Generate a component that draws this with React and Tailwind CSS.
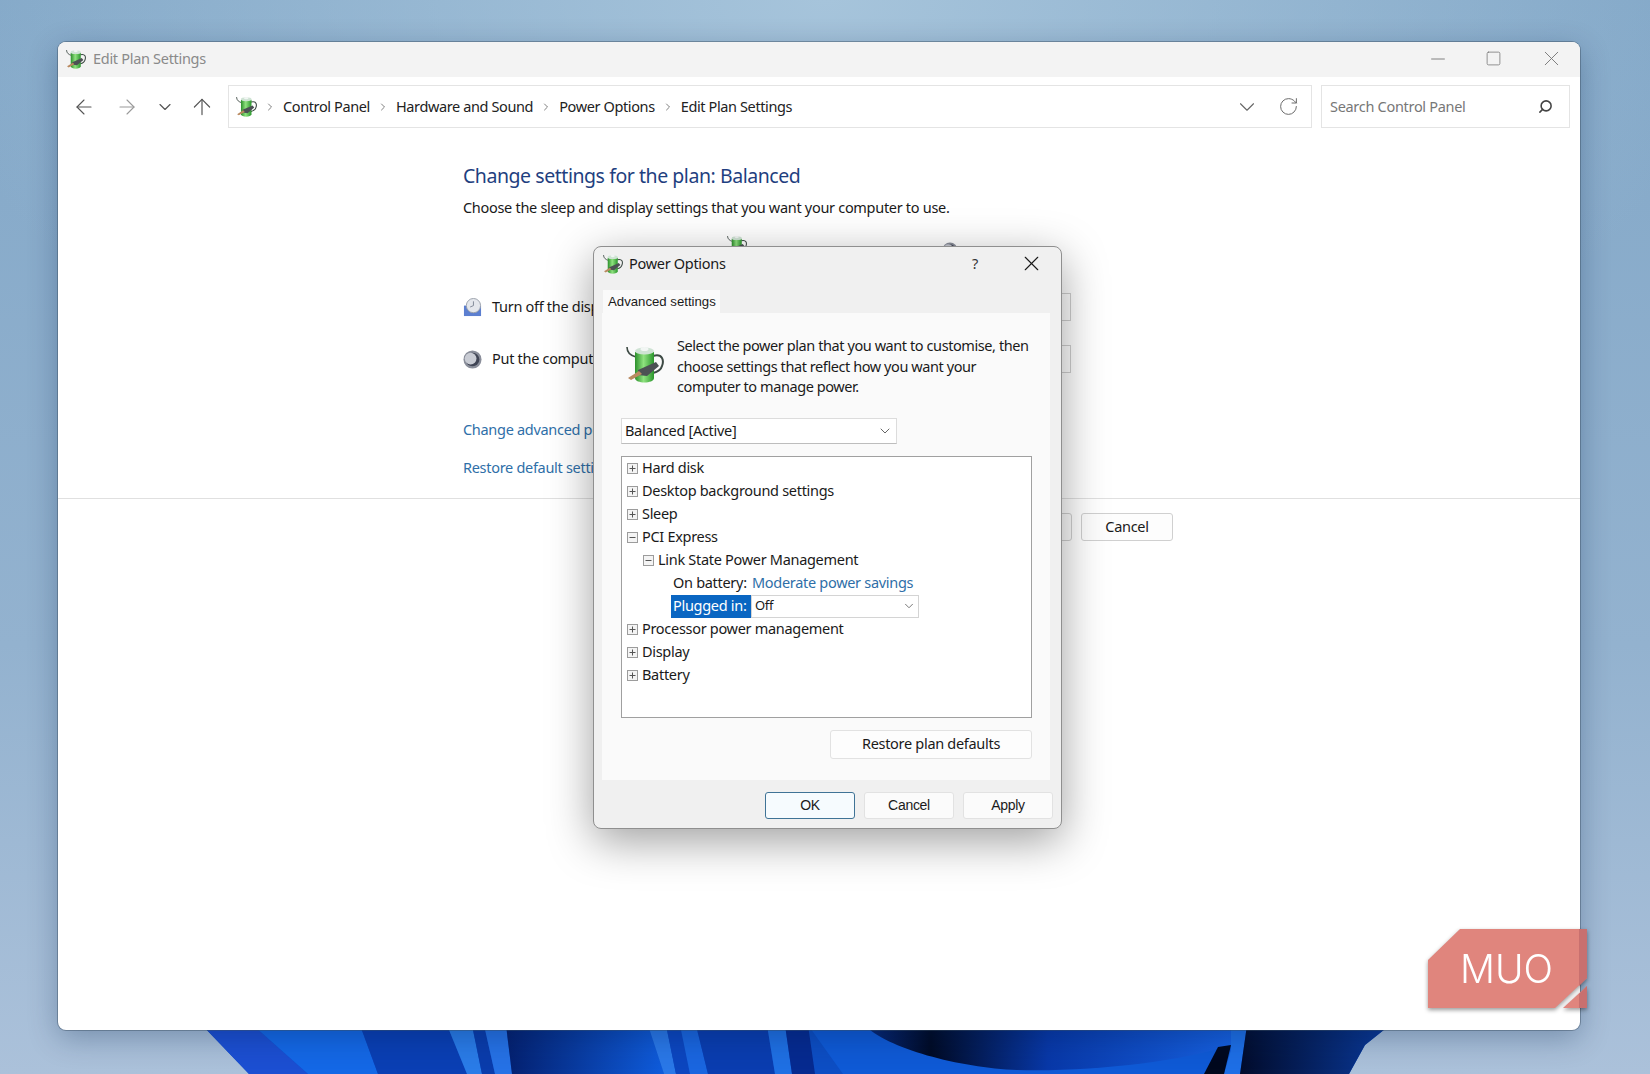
import React from 'react';
import { ArrowLeft, ArrowRight, ArrowUp, ChevronDown, ChevronRight, RotateCw, Search, X, Minus, Square } from 'lucide-react';

const SANS = 'font-["Noto_Sans",sans-serif]';
const ARIAL = 'font-["Liberation_Sans",Arial,sans-serif]';

// ── Drawn icons ────────────────────────────────────────────────────────────────
function PowerIcon({ className }) {
  return (
    <svg viewBox="0 0 38 38" className={className}>
      <defs>
        <linearGradient id="batt" x1="0" x2="1" y1="0" y2="0">
          <stop offset="0" stopColor="#2b8f2b" />
          <stop offset="0.45" stopColor="#8fe27f" />
          <stop offset="1" stopColor="#2a962c" />
        </linearGradient>
      </defs>
      <path d="M1 2 C1 8 6 11 10 12" fill="none" stroke="#3d4a44" strokeWidth="1.6" />
      <path d="M27 11 C37 8 38 16 36 21 C35 25 31 27 27 28" fill="none" stroke="#3d4a44" strokeWidth="2" />
      <path d="M9 7 L28 7 L28 33 C28 39 9 39 9 33 Z" fill="url(#batt)" />
      <ellipse cx="18.5" cy="6" rx="9.5" ry="3.6" fill="#cfe3d4" />
      <ellipse cx="18.5" cy="4" rx="4" ry="2" fill="#f2f6f4" />
      <path d="M12 25 L30 17 L33 21 L21 31 L12 30 Z" fill="#4c5154" />
      <path d="M2 33 L13 26 L16 29 L5 35 Z" fill="#b9895f" />
    </svg>
  );
}

function ClockIcon({ className }) {
  return (
    <svg viewBox="0 0 20 20" className={className}>
      <path d="M1 8 L7 8 L19 8 L19 19 L1 19 Z" fill="#5c7fd0" />
      <circle cx="11" cy="8" r="7.5" fill="#e4e7ec" stroke="#9aa0ab" />
      <path d="M11 3.5 V8 L7.5 9.5" fill="none" stroke="#7f8796" strokeWidth="1" />
    </svg>
  );
}

function MoonIcon({ className }) {
  return (
    <svg viewBox="0 0 20 20" className={className}>
      <circle cx="10" cy="10" r="9.5" fill="#8a8e9a" />
      <circle cx="10" cy="10" r="7.2" fill="#3f4454" />
      <circle cx="8" cy="9" r="6.2" fill="#c9ccd4" />
    </svg>
  );
}

function ExpandBox({ open }) {
  return (
    <svg viewBox="0 0 11 11" className="w-[11px] h-[11px] flex-none">
      <rect x="0.5" y="0.5" width="10" height="10" fill="#f4f4f4" stroke="#9c9c9c" />
      <path d="M2.5 5.5 H8.5" stroke="#555" />
      {!open && <path d="M5.5 2.5 V8.5" stroke="#555" />}
    </svg>
  );
}

function Wallpaper() {
  return (
    <svg viewBox="0 0 1650 1074" className="absolute inset-0 w-[1650px] h-[1074px]">
      <defs>
        <linearGradient id="navyBlue" x1="0" x2="1" y1="0" y2="0">
          <stop offset="0" stopColor="#04206f" />
          <stop offset="1" stopColor="#0f5cdc" />
        </linearGradient>
        <linearGradient id="lens" x1="0" x2="1" y1="0" y2="0">
          <stop offset="0" stopColor="#072a80" />
          <stop offset="0.18" stopColor="#010a24" />
          <stop offset="0.5" stopColor="#0838a8" />
          <stop offset="1" stopColor="#1660e0" />
        </linearGradient>
        <linearGradient id="tail" x1="0" x2="1" y1="0" y2="0">
          <stop offset="0" stopColor="#020c2c" />
          <stop offset="1" stopColor="#0a3a9c" />
        </linearGradient>
      </defs>
      <path d="M202 1025 L249 1074 L1349 1074 L1365 1045 L1390 1025 Z" fill="#0d4ec4" />
      <path d="M202 1025 L253 1025 L308 1074 L249 1074 Z" fill="#1c4fd2" />
      <path d="M253 1025 L360 1025 L378 1074 L308 1074 Z" fill="#1468e6" />
      <path d="M360 1025 L447 1025 L467 1074 L378 1074 Z" fill="#0a3fb4" />
      <path d="M447 1025 L472 1025 L482 1074 L467 1074 Z" fill="#2a7ce8" />
      <path d="M472 1025 L484 1025 L495 1074 L482 1074 Z" fill="#0a3cac" />
      <path d="M484 1025 L506 1025 L512 1074 L495 1074 Z" fill="#2672e6" />
      <path d="M506 1025 L648 1025 L664 1074 L512 1074 Z" fill="url(#navyBlue)" />
      <path d="M648 1025 L666 1025 L676 1074 L664 1074 Z" fill="#2a78e8" />
      <path d="M666 1025 L680 1025 L690 1074 L676 1074 Z" fill="#0c46c0" />
      <path d="M680 1025 L696 1025 L708 1074 L690 1074 Z" fill="#1a66e0" />
      <path d="M696 1025 L767 1025 L775 1074 L708 1074 Z" fill="#0a3db0" />
      <path d="M767 1025 L785 1025 L792 1074 L775 1074 Z" fill="#1f70e4" />
      <path d="M785 1025 L808 1025 L815 1074 L792 1074 Z" fill="#062a90" />
      <path d="M808 1025 L843 1074 L1240 1074 L1231 1045 L1231 1025 Z" fill="#0f5ad6" />
      <path d="M865 1025 C885 1048 960 1068 1017 1070 C1090 1072 1180 1062 1231 1045 L1231 1025 Z" fill="url(#lens)" />
      <path d="M1231 1025 L1247 1025 L1240 1074 L1224 1074 L1231 1050 Z" fill="#1e6fe6" />
      <path d="M1218 1047 L1231 1045 L1224 1074 L1204 1074 Z" fill="#01081e" />
      <path d="M1247 1025 L1390 1025 L1365 1045 L1349 1074 L1240 1074 Z" fill="url(#tail)" />
    </svg>
  );
}

function MuoLogo() {
  return (
    <svg viewBox="0 0 159 79" className="absolute left-[1428px] top-[929px] w-[159px] h-[79px] drop-shadow-[0_2px_2px_rgba(0,0,0,0.4)]">
      <polygon points="0,31 32,0 159,0 159,49 127,79 0,79" fill="#e0857d" />
      <polygon points="159,57 135,79 159,79" fill="#e0857d" />
      <polygon points="151,0 159,0 159,49 151,57" fill="#c8706f" />
      <polygon points="151,65 159,57 159,79 151,79" fill="#c8706f" />
      <text x="32" y="54" fontFamily="Inter, sans-serif" fontSize="40" fontWeight="300" fill="#fff" textLength="93" lengthAdjust="spacingAndGlyphs">MUO</text>
    </svg>
  );
}

// ── Background window ──────────────────────────────────────────────────────────
function Crumb({ children }) {
  return (
    <>
      <ChevronRight className="w-[12px] h-[12px] text-[#555] flex-none mx-[7px]" strokeWidth={1.5} />
      <span>{children}</span>
    </>
  );
}

function PlanRow({ icon, label }) {
  return (
    <div className="flex items-center justify-between w-[608px] h-[28px]">
      <div className="flex items-center gap-[10px]">
        {icon}
        <span>{label}</span>
      </div>
      <div className="w-[130px] h-[28px] border border-[#d0d0d0] bg-white" />
    </div>
  );
}

function EditPlanWindow() {
  return (
    <div className={`absolute left-[58px] top-[42px] w-[1522px] h-[988px] rounded-lg overflow-hidden bg-white flex flex-col text-[#1a1a1a] ${SANS} text-[14.5px] tracking-[-0.3px] shadow-[0_0_0_1px_rgba(60,80,100,0.45),0_8px_30px_rgba(0,30,70,0.3)]`}>
      {/* Title bar */}
      <div className="h-[35px] flex-none bg-[#f3f3f3] flex items-center pl-[8px] pb-[2px] text-[#8a8a8a]">
        <PowerIcon className="w-[20px] h-[20px]" />
        <span className="ml-[7px]">Edit Plan Settings</span>
        <div className="ml-auto flex items-center text-[#777] pr-[16px]">
          <Minus className="w-[22px] h-[22px]" strokeWidth={1} />
          <Square className="w-[17px] h-[17px] ml-[36px]" strokeWidth={1.1} />
          <X className="w-[25px] h-[25px] ml-[37px]" strokeWidth={0.9} />
        </div>
      </div>

      {/* Toolbar */}
      <div className="flex-none flex pt-[8px] pr-[10px]">
        <div className="w-[170px] flex-none flex items-center text-[#555] pl-[14px]">
          <ArrowLeft className="w-[24px] h-[24px]" strokeWidth={1.1} />
          <ArrowRight className="w-[24px] h-[24px] ml-[19px] text-[#9a9a9a]" strokeWidth={1.1} />
          <ChevronDown className="w-[20px] h-[20px] ml-[16px]" strokeWidth={1.4} />
          <ArrowUp className="w-[26px] h-[26px] ml-[14px]" strokeWidth={1.1} />
        </div>
        <div className="flex-none w-[1084px] h-[43px] border border-[#e4e4e4] flex items-center pl-[7px] text-[#222] tracking-[-0.38px]">
          <PowerIcon className="w-[21px] h-[21px] flex-none" />
          <Crumb>Control Panel</Crumb>
          <Crumb>Hardware and Sound</Crumb>
          <Crumb>Power Options</Crumb>
          <Crumb>Edit Plan Settings</Crumb>
          <ChevronDown className="w-[26px] h-[26px] ml-auto text-[#666]" strokeWidth={1} />
          <RotateCw className="w-[21px] h-[21px] ml-[18px] mr-[12px] text-[#666]" strokeWidth={1.1} />
        </div>
        <div className="ml-[9px] flex-1 h-[43px] border border-[#e4e4e4] flex items-center pl-[8px] pr-[16px] text-[#777]">
          <span>Search Control Panel</span>
          <Search className="w-[15px] h-[15px] ml-auto -scale-x-100 text-[#444]" strokeWidth={2.5} />
        </div>
      </div>

      {/* Plan settings */}
      <div className="pl-[405px]">
        <h1 className="mt-[34px] text-[19.5px] leading-[28px] font-normal tracking-[-0.45px] text-[#1f3f80]">Change settings for the plan: Balanced</h1>
        <p className="mt-[7px] leading-[20px]">Choose the sleep and display settings that you want your computer to use.</p>
        <div className="mt-[18px] h-[24px] flex items-start w-[608px]">
          <PowerIcon className="w-[20px] h-[20px] ml-[264px]" />
          <MoonIcon className="w-[16px] h-[16px] ml-[195px] mt-[7px]" />
        </div>
        <div className="mt-[34px]">
          <PlanRow icon={<ClockIcon className="w-[19px] h-[19px]" />} label="Turn off the display:" />
        </div>
        <div className="mt-[24px]">
          <PlanRow icon={<MoonIcon className="w-[19px] h-[19px]" />} label="Put the computer to sleep:" />
        </div>
        <p className="mt-[46px] leading-[20px] text-[#2f6fa8]">Change advanced power settings</p>
        <p className="mt-[18px] leading-[20px] text-[#2f6fa8]">Restore default settings for this plan</p>
      </div>
      <div className="mt-[21px] h-px bg-[#e0e0e0]" />
      <div className="mt-[14px] flex gap-[9px] pl-[892px]">
        <div className="w-[122px] h-[28px] border border-[#d0d0d0] rounded-[3px] bg-[#fdfdfd] flex items-center justify-center">Save changes</div>
        <div className="w-[92px] h-[28px] border border-[#d0d0d0] rounded-[3px] bg-[#fdfdfd] flex items-center justify-center">Cancel</div>
      </div>
    </div>
  );
}

// ── Power Options dialog ───────────────────────────────────────────────────────
function TreeRow({ pad, open, children }) {
  return (
    <div className="h-[23px] flex items-center gap-[4px]" style={{ paddingLeft: pad }}>
      <ExpandBox open={open} />
      <span>{children}</span>
    </div>
  );
}

function DialogButton({ primary, children }) {
  return (
    <div className={`w-[90px] h-[27px] rounded-[3px] flex items-center justify-center ${ARIAL} text-[14px] ${primary ? 'border border-[#3f7396] bg-[#f6fbfe]' : 'border border-[#e2e2e2] bg-[#fbfbfb]'}`}>
      {children}
    </div>
  );
}

function PowerOptionsDialog() {
  return (
    <div className={`absolute left-[593px] top-[246px] w-[469px] h-[583px] rounded-lg bg-[#f0f0f0] border border-[#8f8f8f] flex flex-col text-[#1a1a1a] ${SANS} text-[14.5px] tracking-[-0.3px] shadow-[0_12px_45px_rgba(0,0,0,0.38)]`}>
      <div className="h-[43px] flex-none flex items-center pl-[9px] pb-[10px]">
        <PowerIcon className="w-[20px] h-[20px]" />
        <span className="ml-[6px]">Power Options</span>
        <span className="ml-auto text-[#333]">?</span>
        <X className="w-[25px] h-[25px] ml-[41px] mr-[17px]" strokeWidth={1.1} />
      </div>
      <div className={`ml-[9px] w-[117px] h-[23px] flex-none bg-[#fafafa] flex items-center pl-[5px] whitespace-nowrap tracking-normal ${ARIAL} text-[13.2px]`}>Advanced settings</div>
      <div className="ml-[8px] w-[448px] h-[467px] flex-none bg-[#fafafa] pt-[22px] pl-[19px] pr-[18px]">
        <div className="flex pl-[5px]">
          <PowerIcon className="w-[38px] h-[38px] flex-none mt-[10px]" />
          <p className="ml-[13px] leading-[20.5px] whitespace-nowrap tracking-[-0.42px]">
            Select the power plan that you want to customise, then<br />
            choose settings that reflect how you want your<br />
            computer to manage power.
          </p>
        </div>
        <div className="mt-[21px] w-[276px] h-[26px] bg-white border border-[#dcdcdc] border-b-[#bdbdbd] flex items-center pl-[3px] pr-[3px]">
          <span>Balanced [Active]</span>
          <ChevronDown className="w-[16px] h-[16px] ml-auto text-[#666]" strokeWidth={1.5} />
        </div>
        <div className="mt-[12px] w-[411px] h-[262px] bg-white border-[1.5px] border-[#a0a0a0]">
          <TreeRow pad={5}>Hard disk</TreeRow>
          <TreeRow pad={5}>Desktop background settings</TreeRow>
          <TreeRow pad={5}>Sleep</TreeRow>
          <TreeRow pad={5} open>PCI Express</TreeRow>
          <TreeRow pad={21} open>Link State Power Management</TreeRow>
          <div className="h-[23px] flex items-center pl-[51px]">
            <span className="w-[79px] flex-none">On battery:</span>
            <span className="text-[#2f6fa8]">Moderate power savings</span>
          </div>
          <div className="h-[23px] flex pl-[49px]">
            <span className="w-[80px] flex-none bg-[#0a66c2] text-white pl-[2px] flex items-center">Plugged in:</span>
            <div className="w-[168px] border border-[#d4d4d4] flex items-center pl-[3px] pr-[2px] text-[13px]">
              <span>Off</span>
              <ChevronDown className="w-[14px] h-[14px] ml-auto text-[#666]" strokeWidth={1.5} />
            </div>
          </div>
          <TreeRow pad={5}>Processor power management</TreeRow>
          <TreeRow pad={5}>Display</TreeRow>
          <TreeRow pad={5}>Battery</TreeRow>
        </div>
        <div className="mt-[12px] flex justify-end">
          <div className="w-[202px] h-[29px] rounded-[3px] border border-[#e2e2e2] bg-[#fdfdfd] flex items-center justify-center">Restore plan defaults</div>
        </div>
      </div>
      <div className="mt-[12px] flex justify-end gap-[9px] pr-[8px]">
        <DialogButton primary>OK</DialogButton>
        <DialogButton>Cancel</DialogButton>
        <DialogButton>Apply</DialogButton>
      </div>
    </div>
  );
}

export default function App() {
  return (
    <div className="relative w-[1650px] h-[1074px] overflow-hidden bg-[radial-gradient(ellipse_900px_500px_at_50%_0%,#a6c4db,transparent),linear-gradient(180deg,#83a8c8,#93b2cf_60%,#abc1da)]">
      <Wallpaper />
      <EditPlanWindow />
      <PowerOptionsDialog />
      <MuoLogo />
    </div>
  );
}
